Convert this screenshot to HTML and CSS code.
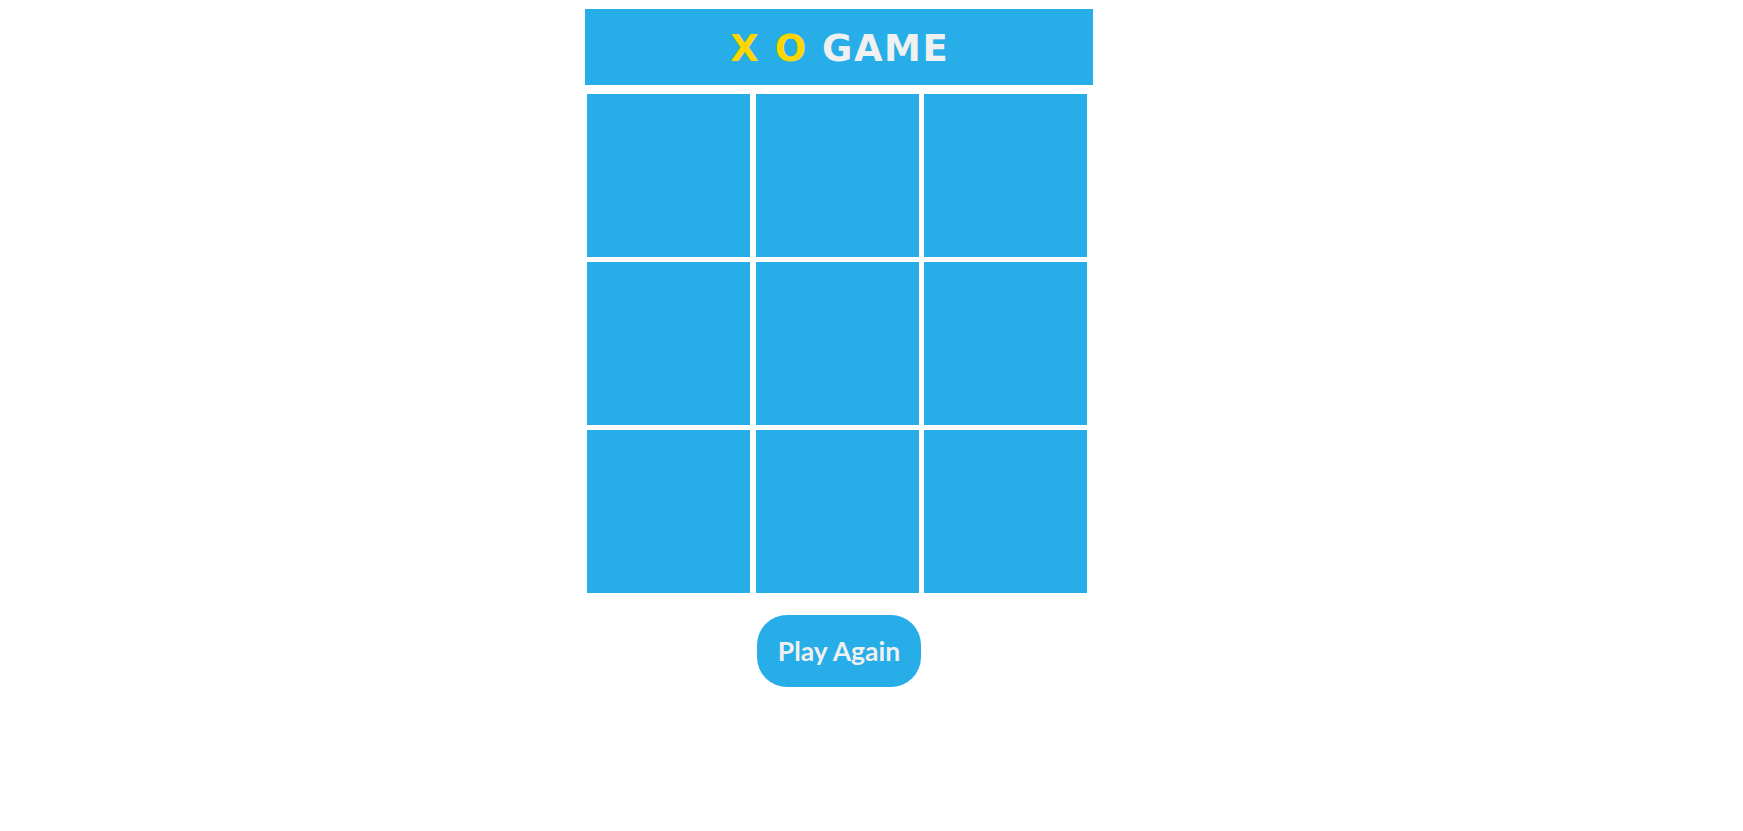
FILE: index.html
```html
<!DOCTYPE html>
<html lang="en">
<head>
<meta charset="utf-8">
<title>X O Game</title>
<link rel="stylesheet" href="styles.css">
</head>
<body>
<main class="app">
  <header class="title-bar">
    <h1 class="title"><span class="mark">X</span> <span class="mark">O</span> GAME</h1>
  </header>
  <section class="board">
    <div class="cell"></div>
    <div class="cell"></div>
    <div class="cell"></div>
    <div class="cell"></div>
    <div class="cell"></div>
    <div class="cell"></div>
    <div class="cell"></div>
    <div class="cell"></div>
    <div class="cell"></div>
  </section>
  <div class="actions">
    <button class="play-again" type="button">Play Again</button>
  </div>
</main>
</body>
</html>
```

FILE: styles.css
```css
html, body {
  margin: 0;
  padding: 0;
  background: #ffffff;
}

.app {
  width: 508px;
  margin: 9px 0 0 585px;
  display: flex;
  flex-direction: column;
  align-items: center;
}

.title-bar {
  width: 508px;
  height: 76px;
  background: #27ade8;
  display: flex;
  align-items: center;
  justify-content: center;
}

.title {
  margin: 0;
  font-family: "DejaVu Sans", sans-serif;
  font-weight: bold;
  font-size: 37px;
  letter-spacing: 1.5px;
  line-height: 1;
  color: #f0f0f0;
  padding: 2px 0 0 1.5px;
}

.mark {
  color: #ffd700;
}

.board {
  margin-top: 9px;
  margin-right: 4px;
  display: grid;
  grid-template-columns: repeat(3, 163px);
  grid-template-rows: repeat(3, 163.4px);
  column-gap: 5.5px;
  row-gap: 4.5px;
}

.cell {
  background: #27ade8;
}

.actions {
  margin-top: 22px;
  display: flex;
  justify-content: center;
}

.play-again {
  width: 164px;
  height: 72px;
  border: none;
  border-radius: 30px;
  background: #27ade8;
  color: #f0f0f0;
  font-family: Lato, "Noto Sans", sans-serif;
  font-weight: bold;
  font-size: 26.5px;
  padding: 0;
  cursor: pointer;
}
```
